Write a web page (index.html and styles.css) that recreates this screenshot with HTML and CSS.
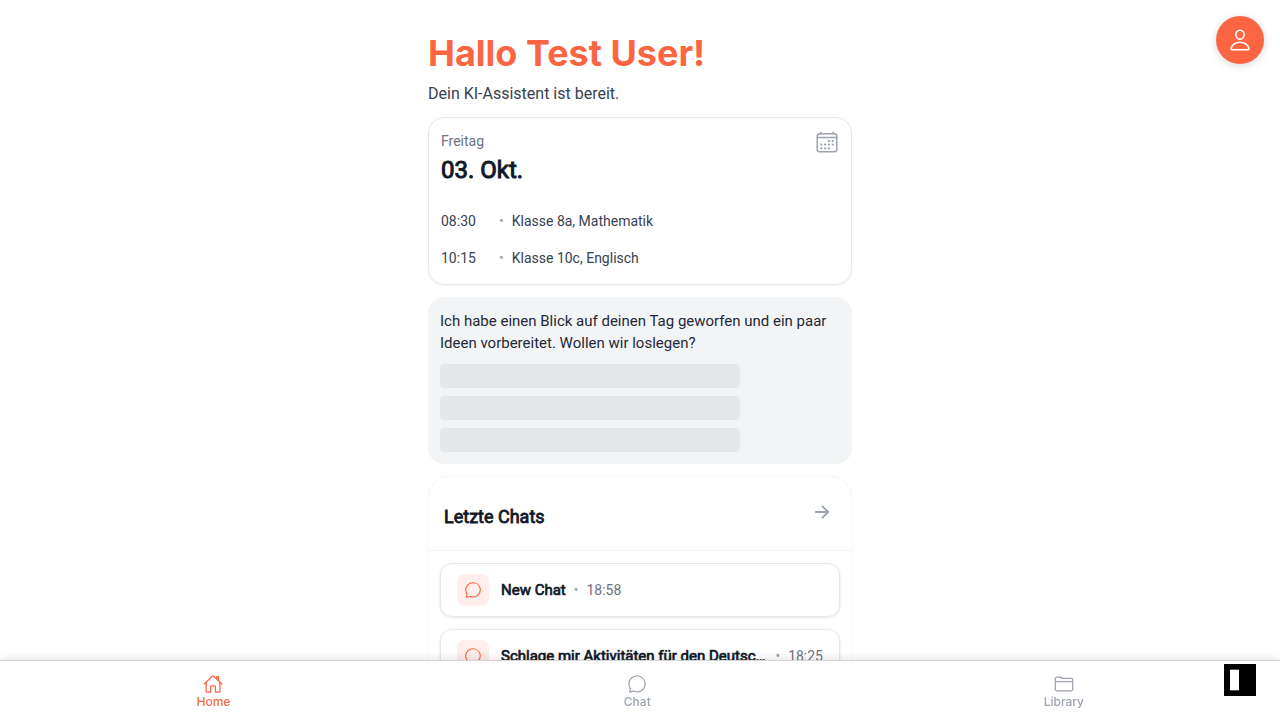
FILE: index.html
```html
<!DOCTYPE html>
<html lang="de">
<head>
<meta charset="utf-8">
<title>Home</title>
<link rel="stylesheet" href="styles.css">
</head>
<body>
<svg class="defs" width="0" height="0">
  <symbol id="bubble" viewBox="0 0 512 512"><path d="M87.49 380c1.19-4.38-1.44-10.47-3.95-14.86a44.86 44.86 0 00-2.54-3.8 199.81 199.81 0 01-33-110C47.65 139.09 140.73 48 255.83 48 356.21 48 440 117.54 459.58 209.85a199 199 0 014.42 41.64c0 112.41-89.49 204.93-204.59 204.93-18.3 0-43-4.6-56.47-8.37s-26.92-8.77-30.39-10.11a31.09 31.09 0 00-11.12-2.07 30.71 30.71 0 00-12.09 2.43l-67.83 24.48a16 16 0 01-4.67 1.22 9.6 9.6 0 01-9.57-9.74 15.85 15.85 0 01.6-3.29z"/></symbol>
</svg>
<button class="profile" aria-label="Profil">
  <svg class="icon icon-24" viewBox="0 0 512 512"><path d="M344 144c-3.92 52.87-44 96-88 96s-84.15-43.12-88-96c-4-55 35-96 88-96s92 42 88 96z"/><path d="M256 304c-87 0-175.3 48-191.64 138.6C62.39 453.52 68.57 464 80 464h352c11.44 0 17.62-10.48 15.65-21.4C431.3 352 343 304 256 304z"/></svg>
</button>
<main class="content">
  <header class="welcome">
    <h1 class="title">Hallo Test User!</h1>
    <p class="subtitle">Dein KI-Assistent ist bereit.</p>
  </header>
  <section class="calendar">
    <div class="calendar-head">
      <div>
        <p class="weekday">Freitag</p>
        <p class="date">03. Okt.</p>
      </div>
      <svg class="icon icon-24" viewBox="0 0 512 512"><rect x="48" y="80" width="416" height="384" rx="48"/><path d="M128 48v32M384 48v32M464 160H48"/><g class="dots"><circle cx="296" cy="232" r="24"/><circle cx="376" cy="232" r="24"/><circle cx="296" cy="312" r="24"/><circle cx="376" cy="312" r="24"/><circle cx="136" cy="312" r="24"/><circle cx="216" cy="312" r="24"/><circle cx="136" cy="392" r="24"/><circle cx="216" cy="392" r="24"/><circle cx="296" cy="392" r="24"/></g></svg>
    </div>
    <div class="events">
      <div class="event"><span class="event-time">08:30</span><span class="dot">•</span><span>Klasse 8a, Mathematik</span></div>
      <div class="event"><span class="event-time">10:15</span><span class="dot">•</span><span>Klasse 10c, Englisch</span></div>
    </div>
  </section>
  <section class="assistant">
    <p class="assistant-text">Ich habe einen Blick auf deinen Tag geworfen und ein paar Ideen vorbereitet. Wollen wir loslegen?</p>
    <div class="skeleton"></div>
    <div class="skeleton"></div>
    <div class="skeleton"></div>
  </section>
  <section class="chats">
    <div class="chats-head">
      <h2 class="chats-title">Letzte Chats</h2>
      <svg class="icon arrow" viewBox="0 0 512 512"><path d="M268 112l144 144-144 144M392 256H100"/></svg>
    </div>
    <div class="chat-list">
      <div class="chat">
        <span class="chat-badge"><svg class="icon icon-18"><use href="#bubble"/></svg></span>
        <span class="chat-name">New Chat</span><span class="dot">•</span><span class="chat-time">18:58</span>
      </div>
      <div class="chat">
        <span class="chat-badge"><svg class="icon icon-18"><use href="#bubble"/></svg></span>
        <span class="chat-name chat-name-long">Schlage mir Aktivitäten für den Deutsc…</span><span class="dot">•</span><span class="chat-time">18:25</span>
      </div>
    </div>
  </section>
</main>
<nav class="tabs">
  <a class="tab active"><svg class="icon icon-20" viewBox="0 0 512 512"><path d="M80 212v236a16 16 0 0016 16h96V328a24 24 0 0124-24h80a24 24 0 0124 24v136h96a16 16 0 0016-16V212"/><path d="M480 256L266.89 52c-5-5.28-16.69-5.34-21.78 0L32 256M400 179V64h-48v69"/></svg><span>Home</span></a>
  <a class="tab"><svg class="icon icon-20"><use href="#bubble"/></svg><span>Chat</span></a>
  <a class="tab"><svg class="icon icon-20" viewBox="0 0 512 512"><path d="M440 432H72a40 40 0 01-40-40V120a40 40 0 0140-40h75.89a40 40 0 0122.19 6.72l27.84 18.56a40 40 0 0022.19 6.72H440a40 40 0 0140 40v240a40 40 0 01-40 40zM32 192h448"/></svg><span>Library</span></a>
</nav>
<div class="devtool"><span class="devtool-bar"></span></div>
</body>
</html>
```
FILE: styles.css
```css
* { box-sizing: border-box; margin: 0; padding: 0; }
body { width: 1280px; height: 720px; overflow: hidden; background: #fff; font-family: Roboto, sans-serif; color: #111827; }
.defs { position: absolute; }
.icon { display: block; flex: none; fill: none; stroke: currentColor; stroke-width: 32; stroke-linecap: round; stroke-linejoin: round; }
.icon-24 { width: 24px; height: 24px; }
.icon-20 { width: 20px; height: 20px; }
.icon-18 { width: 18px; height: 18px; }
.dots { fill: currentColor; stroke: none; }
.profile { position: fixed; top: 16px; right: 16px; width: 48px; height: 48px; border: 0; border-radius: 50%; background: #fb6542; color: #fff; display: flex; align-items: center; justify-content: center; box-shadow: 0 2px 8px rgba(0,0,0,.15); }
.content { width: 424px; height: 720px; overflow: clip; overflow-clip-margin: 4px; margin: 0 auto; padding-top: 32px; display: flex; flex-direction: column; gap: 12px; }
.content > * { flex: none; }
.title { font: 700 36px/43px Inter, sans-serif; color: #fb6542; }
.subtitle { font-size: 16px; line-height: 24px; color: #374151; margin-top: 7px; }
.welcome { height: 73px; }
.calendar { height: 168px; border: 1px solid #e5e7eb; border-radius: 16px; padding: 12px; box-shadow: 0 1px 2px rgba(0,0,0,.05); }
.calendar-head { display: flex; justify-content: space-between; color: #9ca3af; }
.weekday { font-size: 14px; line-height: 23px; color: #6b7280; }
.date { font-size: 24px; line-height: 34px; font-weight: 400; color: #111827; -webkit-text-stroke: 1px currentColor; }
.events { padding-top: 15px; }
.event { height: 37px; display: flex; align-items: center; font-size: 14px; color: #374151; }
.event-time { width: 58px; }
.dot { font-size: 14px; color: #9ca3af; margin-right: 8px; flex: none; }
.assistant { height: 167px; background: #f3f4f6; border-radius: 16px; padding: 13px 12px 12px; }
.assistant-text { font-size: 15px; line-height: 22px; color: #1f2937; margin-bottom: 10px; }
.skeleton { width: 300px; height: 24px; border-radius: 4px; background: #e5e7eb; margin-bottom: 8px; }
.chats { height: 300px; border-radius: 24px; box-shadow: 0 0 2px rgba(0,0,0,.1); }
.chats-head { height: 75px; border-bottom: 1px solid #f3f4f6; padding: 16px 20px 16px 16px; display: flex; justify-content: space-between; }
.chats-title { font-size: 18px; line-height: 26px; font-weight: 400; padding-top: 12px; -webkit-text-stroke: .8px currentColor; }
.arrow { width: 20px; height: 20px; margin-top: 10px; color: #9ca3af; stroke-width: 48; }
.chat-list { padding: 12px; display: flex; flex-direction: column; gap: 12px; }
.chat { height: 54px; padding: 0 16px; border: 1px solid #e5e7eb; border-radius: 12px; display: flex; align-items: center; box-shadow: 0 1px 3px rgba(0,0,0,.1); }
.chat-badge { width: 32px; height: 32px; border-radius: 8px; background: #ffeeeb; color: #fb6542; display: flex; align-items: center; justify-content: center; margin-right: 12px; flex: none; }
.chat-name { font-size: 15px; font-weight: 400; white-space: nowrap; margin-right: 8px; -webkit-text-stroke: .7px currentColor; }
.chat-name-long { flex: 1; }
.chat-time { font-size: 14px; color: #6b7280; }
.tabs { position: fixed; left: 0; right: 0; bottom: 0; height: 60px; background: #fff; border-top: 1px solid #d5d5d6; display: flex; justify-content: space-around; box-shadow: 0 -2px 8px rgba(0,0,0,.1); }
.tab { padding: 13px 12px 0; display: flex; flex-direction: column; align-items: center; color: #9ca3af; font: 500 12px/16px Inter, sans-serif; }
.tab:not(.active) { padding-left: 12.5px; padding-right: 11.5px; }
.active { color: #fb6542; }
.devtool { position: fixed; left: 1224px; top: 664px; width: 32px; height: 32px; padding: 5px 6px; background: #000; }
.devtool-bar { display: block; width: 9px; height: 22px; background: #fff; border: solid #555; border-width: 1px 0; }
```
